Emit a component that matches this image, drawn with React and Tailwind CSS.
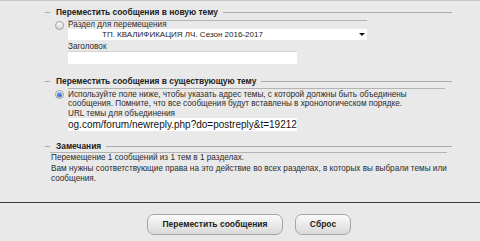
import React from "react";

function Legend({ children, mt }) {
  return (
    <div className={`flex items-center h-[10px] ${mt}`}>
      <div className="w-[5px] h-px bg-[#a9a9a9]" />
      <span className="ml-[6px] mr-[5px] font-bold text-[8.4px] text-[#222] leading-[10px] whitespace-nowrap">{children}</span>
      <div className="flex-1 h-px bg-[#a9a9a9]" />
    </div>
  );
}

function Radio({ checked }) {
  return (
    <div className="w-[9px] h-[9px] rounded-full border border-[#9c9c9c] bg-gradient-to-b from-[#ffffff] to-[#d4d4d4] flex items-center justify-center shrink-0">
      {checked && <div className="w-[5px] h-[5px] rounded-full bg-gradient-to-b from-[#7fb2ff] to-[#1a5cc8]" />}
    </div>
  );
}

export default function App() {
  return (
    <div
      className="w-[480px] h-[241px] bg-[#e9e9e9] border-t border-[#c6c6c6] text-[8.2px] text-[#2c2c2c] overflow-hidden flex flex-col"
      style={{ fontFamily: '"Liberation Sans", Arial, sans-serif' }}
    >
      <div className="ml-[45px] w-[407px]">
        {/* Fieldset 1 */}
        <Legend mt="mt-[6px]">Переместить сообщения в новую тему</Legend>
        <div className="flex mt-[3px] pl-[10px]">
          <div className="mt-[1px] w-[13px]">
            <Radio />
          </div>
          <div className="w-[299px] border-t border-[#b3b3b3]">
            <div className="leading-[8px]">Раздел для перемещения</div>
            <div className="relative h-[11px] bg-white pl-[34px] leading-[11px] text-[8px] text-[#222] whitespace-nowrap">
              ТП. КВАЛИФИКАЦИЯ ЛЧ. Сезон 2016-2017
              <div className="absolute right-[2px] top-[4px] w-0 h-0 border-l-[3px] border-r-[3px] border-t-[3px] border-l-transparent border-r-transparent border-t-[#111]" />
            </div>
            <div className="mt-[2px] leading-[9px]">Заголовок</div>
            <div className="w-[229px] h-[13px] bg-white border-t border-[#d2d2d2]" />
          </div>
        </div>

        {/* Fieldset 2 */}
        <Legend mt="mt-[12px]">Переместить сообщения в существующую тему</Legend>
        <div className="flex mt-[2px] pl-[10px]">
          <div className="mt-[2px] w-[13px]">
            <Radio checked />
          </div>
          <div className="w-[377px] border-t border-[#b3b3b3]">
            <div className="pt-[1px] leading-[9px] whitespace-nowrap">
              Используйте поле ниже, чтобы указать адрес темы, с которой должны быть объединены
              <br />
              сообщения. Помните, что все сообщения будут вставлены в хронологическом порядке.
            </div>
            <div className="mt-[1px] leading-[9px]">URL темы для объединения</div>
            <div className="w-[229px] h-[13px] bg-white overflow-hidden whitespace-nowrap text-[10px] leading-[13px] text-[#111]">
              og.com/forum/newreply.php?do=postreply&amp;t=19212
            </div>
          </div>
        </div>

        {/* Notes */}
        <Legend mt="mt-[10px]">Замечания</Legend>
        <div className="mt-[1px] pl-[5px]">
          <div className="w-[397px] border-t border-[#b3b3b3] pl-[1px] leading-[10px]">
            <div>Перемещение 1 сообщений из 1 тем в 1 разделах.</div>
            <div className="mt-[1px] whitespace-nowrap">
              Вам нужны соответствующие права на это действие во всех разделах, в которых вы выбрали темы или
              <br />
              сообщения.
            </div>
          </div>
        </div>
      </div>

      {/* Footer */}
      <div className="mt-[18px] border-t border-[#3a3a3a] flex-1 pt-[11px] flex justify-center pl-[18px] gap-[12px]">
        <button className="w-[136px] h-[21px] rounded-[7px] border border-[#a5a5a5] bg-gradient-to-b from-[#fbfbfb] to-[#d9d9d9] font-bold text-[8.5px] text-[#222]">
          Переместить сообщения
        </button>
        <button className="w-[56px] h-[21px] rounded-[7px] border border-[#a5a5a5] bg-gradient-to-b from-[#fbfbfb] to-[#d9d9d9] font-bold text-[8.5px] text-[#222]">
          Сброс
        </button>
      </div>
    </div>
  );
}
